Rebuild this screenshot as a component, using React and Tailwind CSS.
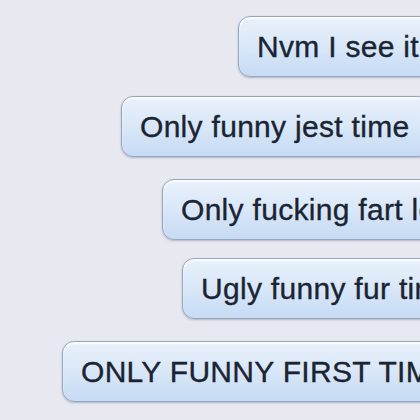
const messages = [
  { text: "Nvm I see it", left: "ml-[238px]", gap: "mt-[16px]" },
  { text: "Only funny jest time", left: "ml-[121px]", gap: "mt-[19px]" },
  { text: "Only fucking fart lol", left: "ml-[162px]", gap: "mt-[22px]" },
  { text: "Ugly funny fur time", left: "ml-[182px]", gap: "mt-[18px]" },
  { text: "ONLY FUNNY FIRST TIME", left: "ml-[62px]", gap: "mt-[22px]" },
];

function Bubble({ text }) {
  return (
    <div className="flex h-[61px] items-center whitespace-nowrap rounded-[12px] border-[1.5px] border-[#95a7bd] bg-gradient-to-b from-[#e9f1fb] via-[#d9e7f8] to-[#c6dbf4] pl-[18px] pr-[20px] text-[30px] leading-none tracking-[0.3px] text-[#1a2432] [-webkit-text-stroke:0.35px_#1a2432] shadow-[inset_0_2px_2px_rgba(255,255,255,0.9),0_1px_2px_rgba(80,90,110,0.35)]">
      {text}
    </div>
  );
}

export default function App() {
  return (
    <div
      className="relative h-[420px] w-[420px] overflow-hidden bg-[#e7e8f0]"
      style={{ fontFamily: '"Liberation Sans", Arial, sans-serif' }}
    >
      <div className="flex flex-col">
        {messages.map((m) => (
          <div key={m.text} className={`${m.gap} flex`}>
            <div className={`${m.left} shrink-0`}>
              <Bubble text={m.text} />
            </div>
          </div>
        ))}
      </div>
    </div>
  );
}
